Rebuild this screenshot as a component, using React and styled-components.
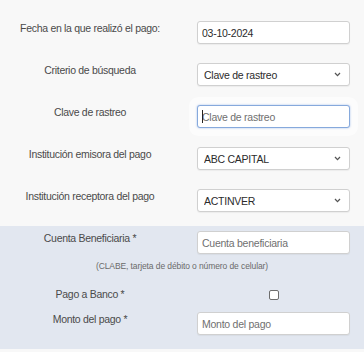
import React from "react";
import styled, { createGlobalStyle } from "styled-components";

const GlobalStyle = createGlobalStyle`
  html, body {
    margin: 0;
    padding: 0;
    background: #ffffff;
  }
  body {
    font-family: "Liberation Sans", Arial, sans-serif;
  }
`;

const chevron =
  "url(\"data:image/svg+xml;utf8,<svg xmlns='http://www.w3.org/2000/svg' width='7' height='5' viewBox='0 0 7 5'><path d='M1 1 L3.5 3.6 L6 1' fill='none' stroke='%23555' stroke-width='1.3'/></svg>\")";

const Page = styled.div`
  width: 364px;
  height: 352px;
  background: #f8f8f8;
  display: flex;
  flex-direction: column;
  overflow: hidden;
`;

const TopBlock = styled.div`
  display: flex;
  flex-direction: column;
  gap: 19px;
  padding-top: 21px;
  padding-bottom: 14px;
`;

const Highlight = styled.div`
  background: #e2e7f0;
  display: flex;
  flex-direction: column;
  padding: 5px 0 14px;
`;

const Row = styled.div`
  display: grid;
  grid-template-columns: 180px 153px;
  column-gap: 17px;
  align-items: start;
`;

const Label = styled.label`
  text-align: center;
  font-size: 10.5px;
  line-height: 12px;
  padding-top: 1px;
  color: #4a4a4a;
  letter-spacing: -0.3px;
`;

const fieldBase = `
  box-sizing: border-box;
  width: 153px;
  height: 23px;
  border: 1px solid #d0d0d0;
  border-radius: 3px;
  background: #ffffff;
  font-family: "Liberation Sans", Arial, sans-serif;
  font-size: 10.5px;
  letter-spacing: -0.25px;
  color: #2b2b2b;
  padding: 0 0 0 4px;
  box-shadow: 0 1px 1px rgba(0, 0, 0, 0.05);
  outline: none;
  margin: 0;
`;

const TextInput = styled.input`
  ${fieldBase}
  &::placeholder {
    color: #707070;
  }
  ${(p) =>
    p.$focused &&
    `
    border-color: #86a9dc;
    box-shadow: 0 0 2px rgba(90, 140, 220, 0.6), 0 0 0 8px rgba(255, 255, 255, 0.55);
  `}
`;

const Select = styled.select`
  ${fieldBase}
  appearance: none;
  -webkit-appearance: none;
  padding-left: 6px;
  background-image: ${chevron};
  background-repeat: no-repeat;
  background-position: right 8px center;
`;

const FieldWrap = styled.div`
  position: relative;
  width: 153px;
`;

const Caret = styled.span`
  position: absolute;
  left: 5px;
  top: 5px;
  width: 1px;
  height: 13px;
  background: #222;
`;

const Hint = styled.div`
  text-align: center;
  font-size: 8.5px;
  color: #6a6a6a;
  letter-spacing: -0.1px;
  margin: 7px 0 0;
  height: 14px;
  line-height: 10px;
`;

const CheckRow = styled(Row)`
  margin-top: 12px;
  height: 17px;
`;

const CheckCell = styled.div`
  display: flex;
  justify-content: center;
`;

const Check = styled.span`
  display: block;
  width: 8px;
  height: 8px;
  border: 1px solid #6d6d6d;
  border-radius: 2px;
  background: #fff;
  margin-top: 3px;
`;

const AmountRow = styled(Row)`
  margin-top: 8px;
`;

const fields = [
  { label: "Fecha en la que realizó el pago:", type: "input", value: "03-10-2024" },
  { label: "Criterio de búsqueda", type: "select", value: "Clave de rastreo" },
  { label: "Clave de rastreo", type: "focus", placeholder: "Clave de rastreo" },
  { label: "Institución emisora del pago", type: "select", value: "ABC CAPITAL" },
  { label: "Institución receptora del pago", type: "select", value: "ACTINVER" },
];

export default function App() {
  return (
    <>
      <GlobalStyle />
      <Page>
        <TopBlock>
          {fields.map((f) => (
            <Row key={f.label}>
              <Label>{f.label}</Label>
              {f.type === "input" && <TextInput defaultValue={f.value} readOnly />}
              {f.type === "select" && (
                <Select defaultValue={f.value}>
                  <option>{f.value}</option>
                </Select>
              )}
              {f.type === "focus" && (
                <FieldWrap>
                  <TextInput $focused placeholder={f.placeholder} readOnly />
                  <Caret />
                </FieldWrap>
              )}
            </Row>
          ))}
        </TopBlock>
        <Highlight>
          <Row>
            <Label>Cuenta Beneficiaria *</Label>
            <TextInput placeholder="Cuenta beneficiaria" readOnly />
          </Row>
          <Hint>(CLABE, tarjeta de débito o número de celular)</Hint>
          <CheckRow>
            <Label>Pago a Banco *</Label>
            <CheckCell>
              <Check />
            </CheckCell>
          </CheckRow>
          <AmountRow>
            <Label>Monto del pago *</Label>
            <TextInput placeholder="Monto del pago" readOnly />
          </AmountRow>
        </Highlight>
      </Page>
    </>
  );
}
